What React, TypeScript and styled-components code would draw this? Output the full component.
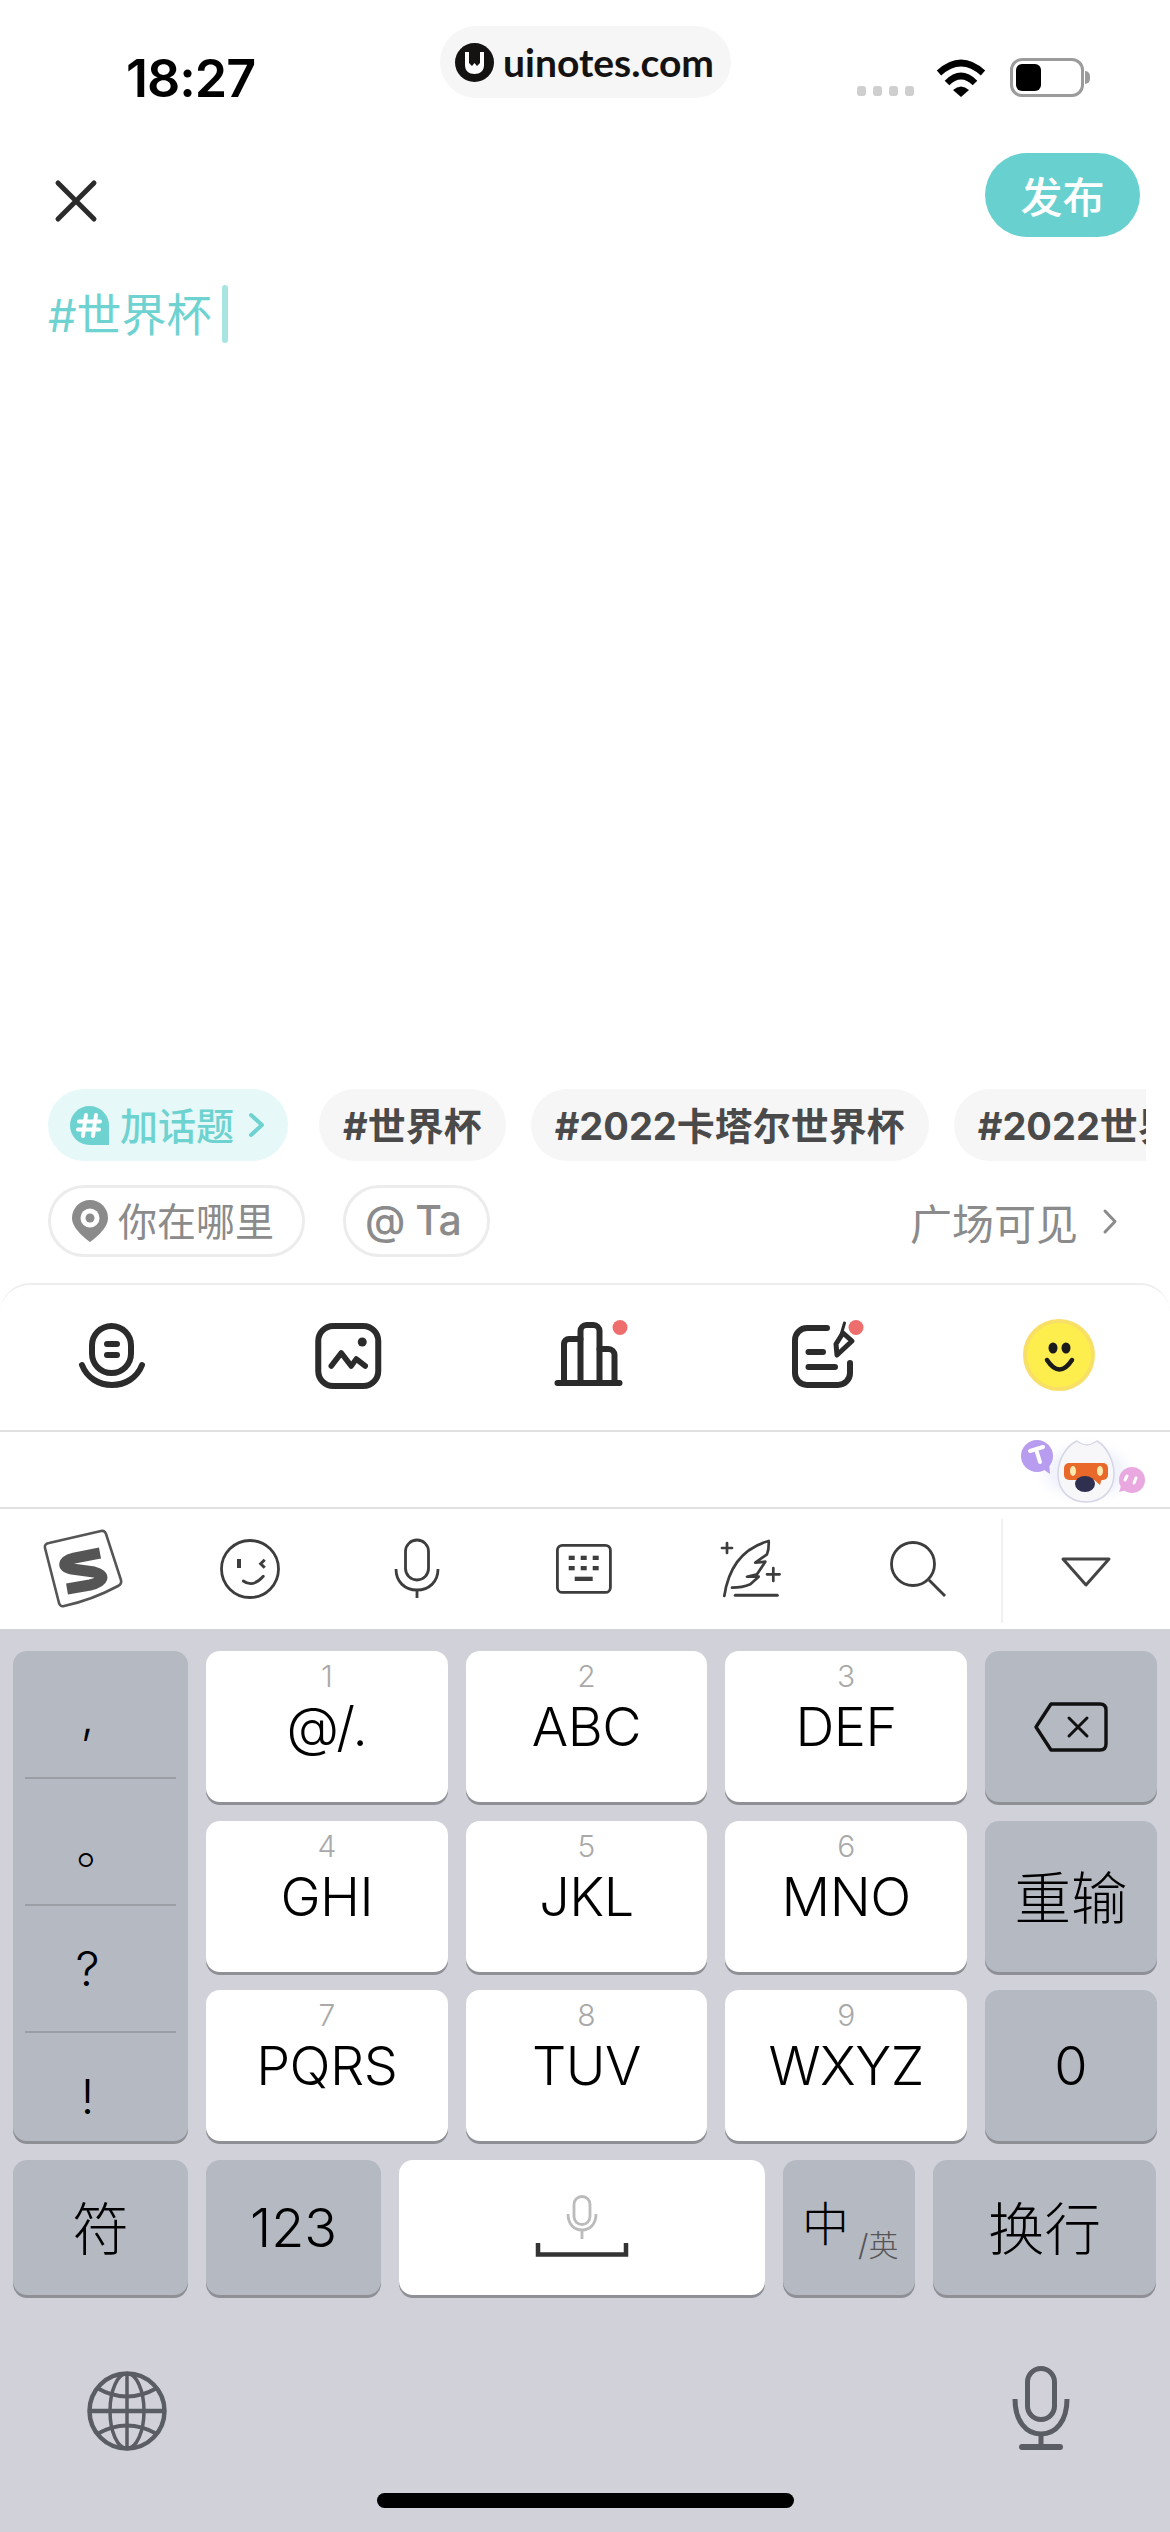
import styled, { createGlobalStyle } from 'styled-components';

const CJK = '"Inter", "Noto Sans CJK SC", sans-serif';
const TEAL = '#6ed3d0';

const GlobalStyle = createGlobalStyle`
  * { box-sizing: border-box; }
  html, body { margin: 0; padding: 0; background: #fff; }
  body { font-family: ${CJK}; }
`;

const Page = styled.div`
  width: 1170px;
  height: 2532px;
  display: flex;
  flex-direction: column;
  overflow: hidden;
  background: #fff;
`;

/* status bar */
const StatusBar = styled.div`
  height: 153px;
  flex-shrink: 0;
  display: grid;
  grid-template-columns: 440px 291px 1fr;
  align-items: start;
`;

const Time = styled.div`
  padding: 50px 0 0 126px;
  font-size: 52px;
  line-height: 58px;
  font-weight: 600;
  letter-spacing: -1px;
  color: #000;
`;

const WatermarkPill = styled.div`
  margin-top: 26px;
  height: 72px;
  border-radius: 36px;
  background: #f6f6f6;
  display: flex;
  align-items: center;
  padding: 0 0 0 15px;
  gap: 9px;
  font-family: 'Lato', sans-serif;
  font-size: 39px;
  font-weight: 700;
  color: #151212;
`;

const StatusIcons = styled.div`
  margin-top: 58px;
  height: 39px;
  padding-left: 126px;
  display: flex;
  align-items: flex-end;
`;

const SignalDots = styled.div`
  display: flex;
  gap: 7px;
  margin: 0 22px 1px 0;
`;

const SignalDot = styled.span`
  width: 9px;
  height: 10px;
  border-radius: 3px;
  background: #cfcfcf;
`;

const Battery = styled.div`
  position: relative;
  margin-left: 24px;
  width: 74px;
  height: 39px;
  border: 3px solid #9b9b9b;
  border-radius: 12px;
  padding: 3px;

  &::after {
    content: '';
    position: absolute;
    left: 72px;
    top: 10px;
    width: 5px;
    height: 13px;
    border-radius: 0 6px 6px 0;
    background: #9b9b9b;
  }
`;

const BatteryFill = styled.div`
  width: 25px;
  height: 100%;
  border-radius: 6px;
  background: #000;
`;

/* header + compose */
const Header = styled.div`
  height: 84px;
  flex-shrink: 0;
  padding: 0 30px 0 55px;
  display: flex;
  align-items: center;
  justify-content: space-between;
`;

const CloseButton = styled.div`
  padding-top: 12px;
`;

const PublishButton = styled.div`
  width: 155px;
  height: 84px;
  border-radius: 42px;
  background: #68d1cf;
  color: #fff;
  font-size: 42px;
  font-weight: 500;
  padding-bottom: 2px;
  display: flex;
  align-items: center;
  justify-content: center;
`;

const Compose = styled.div`
  height: 852px;
  flex-shrink: 0;
  padding: 48px 0 0 48px;
  display: flex;
  align-items: flex-start;
  gap: 10px;
`;

const TopicText = styled.div`
  font-size: 45px;
  line-height: 58px;
  padding-top: 2px;
  color: ${TEAL};
`;

const Caret = styled.span`
  width: 6px;
  height: 58px;
  border-radius: 3px;
  background: #a8e4e2;
`;

/* topic chips */
const TagRow = styled.div`
  height: 72px;
  flex-shrink: 0;
  margin: 0 24px 0 48px;
  display: flex;
  gap: 25px;
  overflow: hidden;
`;

const AddTopic = styled.div`
  flex-shrink: 0;
  width: 240px;
  margin-right: 6px;
  padding-left: 22px;
  border-radius: 36px;
  background: #e6f8f8;
  color: ${TEAL};
  font-size: 38px;
  font-weight: 500;
  display: flex;
  align-items: center;
  gap: 11px;
`;

const ChipLabel = styled.span`
  margin-bottom: 4px;
`;

const ChevronSlot = styled.span`
  margin-left: 4px;
`;

const TopicChip = styled.div`
  flex-shrink: 0;
  padding: 0 24px 4px;
  border-radius: 36px;
  background: #f6f6f6;
  color: #4a4a4a;
  font-size: 38px;
  font-weight: 700;
  white-space: nowrap;
  display: flex;
  align-items: center;
`;

const MetaRow = styled.div`
  height: 72px;
  flex-shrink: 0;
  margin-top: 24px;
  padding: 0 52px 0 48px;
  display: flex;
  align-items: center;
  gap: 38px;
`;

const OutlineChip = styled.div<{ $width: number; $pad: number }>`
  width: ${(p) => p.$width}px;
  height: 72px;
  padding-left: ${(p) => p.$pad}px;
  border: 3px solid #ececec;
  border-radius: 36px;
  color: #8b8b8b;
  font-size: 39px;
  display: flex;
  align-items: center;
  gap: 10px;
`;

const MentionLabel = styled.span`
  margin-bottom: 2px;
  font-size: 41px;
  font-weight: 500;
  letter-spacing: -0.5px;
`;

const Visibility = styled.div`
  margin-left: auto;
  color: #8b8b8b;
  font-size: 42px;
  display: flex;
  align-items: center;
  gap: 25px;
`;

/* tools panel */
const ToolPanel = styled.div`
  height: 147px;
  flex-shrink: 0;
  margin-top: 26px;
  padding: 0 75px 5px 76px;
  border-top: 2px solid #eeeeee;
  border-radius: 30px 30px 0 0;
  display: flex;
  align-items: center;
  justify-content: space-between;
`;

const CandidateBar = styled.div`
  height: 79px;
  flex-shrink: 0;
  padding-right: 20px;
  border-top: 2px solid #e0e0e0;
  border-bottom: 2px solid #e0e0e0;
  display: flex;
  align-items: center;
  justify-content: flex-end;
`;

const ImeToolbar = styled.div`
  height: 120px;
  flex-shrink: 0;
  display: grid;
  grid-template-columns: repeat(6, 1fr) 169px;
`;

const ImeTool = styled.div<{ $divided?: boolean }>`
  display: flex;
  align-items: center;
  justify-content: center;
  ${(p) => p.$divided && 'margin: 10px 0 6px; border-left: 2px solid #f0f0f0;'}
`;

/* keyboard */
const Keyboard = styled.div`
  flex: 1;
  background: #d1d2d9;
  padding: 22px 13px 0;
  display: flex;
  flex-direction: column;
`;

const KeyGrid = styled.div`
  display: grid;
  grid-template-columns: 175px repeat(3, 1fr) 172px;
  grid-template-rows: repeat(3, 151px);
  column-gap: 18px;
  row-gap: 18.5px;
`;

const Key = styled.div<{ $dark?: boolean }>`
  border-radius: 14px;
  background: ${(p) => (p.$dark ? '#b5b9c2' : '#fff')};
  box-shadow: 0 3px 0 #8e9096;
  color: #000;
  display: flex;
  align-items: center;
  justify-content: center;
  font-size: 54px;
  font-weight: 300;
`;

const HanziKey = styled(Key)`
  font-size: 56.5px;
  padding-bottom: 5px;
`;

const PunctuationKey = styled(Key)`
  grid-row: 1 / span 3;
  display: grid;
  grid-template-columns: 1fr;
  grid-template-rows: 126px 127px 127px 1fr;
  align-items: stretch;
  justify-content: stretch;
  padding: 0 12px;
`;

const PunctuationCell = styled.div<{ $first?: boolean; $top: number; $left?: number }>`
  border-top: ${(p) => (p.$first ? 'none' : '2px solid #9b9ea5')};
  padding: ${(p) => p.$top}px 26px 0 ${(p) => p.$left ?? 0}px;
  display: flex;
  align-items: center;
  justify-content: center;
  font-size: 48px;
  line-height: 50px;
`;

const DigitKey = styled(Key)`
  flex-direction: column;
  justify-content: flex-start;
  padding-top: 8px;
`;

const KeyNumber = styled.span`
  font-size: 30px;
  line-height: 34px;
  color: #a9a9a9;
`;

const KeyLetters = styled.span`
  margin-top: 4px;
  line-height: 60px;
  letter-spacing: -0.5px;
`;

const BottomKeys = styled.div`
  margin-top: 19px;
  display: grid;
  grid-template-columns: 175px 175px 366px 132px 223px;
  grid-template-rows: 135px;
  column-gap: 18px;
`;

const SpaceKey = styled(Key)`
  flex-direction: column;
  gap: 4px;
  padding-bottom: 4px;
`;

const ModeKey = styled(Key)`
  justify-content: flex-start;
  padding-left: 19px;
`;

const ModeMain = styled.span`
  font-size: 47px;
  margin-top: -14px;
`;

const ModeSlash = styled.span`
  margin: 30px 0 0 9px;
  font-size: 30px;
  color: #555;
  white-space: nowrap;
`;

const SystemRow = styled.div`
  margin-top: 71px;
  padding: 0 87px 0 74px;
  display: flex;
  align-items: flex-start;
  justify-content: space-between;
`;

const GlobeSlot = styled.div`
  padding-top: 5px;
`;

const HomeBar = styled.div`
  align-self: center;
  margin-top: 42px;
  width: 417px;
  height: 15px;
  border-radius: 8px;
  background: #000;
`;

const Svg = styled.svg`
  display: block;
  flex-shrink: 0;
  overflow: visible;
`;

const ICON = '#2b2b2b';

const Logo = () => (
  <Svg width="39" height="39" viewBox="0 0 39 39">
    <circle cx="19.5" cy="19.5" r="19.5" fill="#151212" />
    <path d="M10 9H14V20L17 23L19.5 20L22 23L25 20V9H29V22C29 28 25 31 19.5 31C14 31 10 28 10 22Z" fill="#fff" />
  </Svg>
);

const WifiIcon = () => (
  <Svg width="50" height="38" viewBox="0 0 50 38">
    <path d="M3 14Q25 -6 47 14" fill="none" stroke="#000" strokeWidth="6.5" strokeLinecap="butt" />
    <path d="M11 24Q25 10 39 24" fill="none" stroke="#000" strokeWidth="6.5" />
    <path d="M17 31Q25 24 33 31L25 38Z" fill="#000" />
  </Svg>
);

const CloseIcon = () => (
  <Svg width="42" height="42" viewBox="0 0 42 42">
    <path d="M3 3L39 39M39 3L3 39" stroke="#2b2b2b" strokeWidth="5" strokeLinecap="round" />
  </Svg>
);

const HashBubble = () => (
  <Svg width="39" height="39" viewBox="0 0 39 39">
    <path d="M19.5 0A19.5 19.5 0 1 0 19.5 39H39V19.5A19.5 19.5 0 0 0 19.5 0Z" fill={TEAL} />
    <path d="M16 9L13 30M26 9L23 30M9 15.5H30M8 23.5H29" stroke="#fff" strokeWidth="4" strokeLinecap="round" />
  </Svg>
);

const Chevron = ({ color, w = 16, h = 24, sw = 4 }: { color: string; w?: number; h?: number; sw?: number }) => (
  <Svg width={w} height={h} viewBox={`0 0 ${w} ${h}`}>
    <path d={`M2 2L${w - 3} ${h / 2}L2 ${h - 2}`} fill="none" stroke={color} strokeWidth={sw} strokeLinecap="round" strokeLinejoin="round" />
  </Svg>
);

const PinIcon = () => (
  <Svg width="36" height="42" viewBox="0 0 36 42">
    <path d="M18 0C8 0 0 8 0 18C0 30 18 42 18 42C18 42 36 30 36 18C36 8 28 0 18 0Z" fill="#8b8b8b" />
    <circle cx="18" cy="18" r="9.5" fill="#fff" />
    <circle cx="18" cy="18" r="4.5" fill="#8b8b8b" />
  </Svg>
);

const VoiceTool = () => (
  <Svg width="72" height="72" viewBox="-3 -4 72 72" fill="none" stroke={ICON} strokeWidth="6" strokeLinecap="round">
    <rect x="13" y="3" width="39" height="47" rx="19.5" />
    <path d="M28 21H38M28 32H38" />
    <path d="M3 42C8 55 20 62 33 62S58 55 63 42" />
  </Svg>
);

const ImageTool = () => (
  <Svg width="72" height="72" viewBox="-2.25 -4 72 72" fill="none" stroke={ICON} strokeWidth="6" strokeLinecap="round" strokeLinejoin="round">
    <rect x="3" y="3" width="60" height="60" rx="15" />
    <path d="M16 43L26 30L36 43L41 36L50 43" strokeWidth="5.5" />
    <circle cx="47" cy="19" r="4.5" fill={ICON} stroke="none" />
  </Svg>
);

const ChartTool = () => (
  <Svg width="72" height="72" viewBox="-5.5 -3 72 72" fill="none" stroke={ICON} strokeWidth="6" strokeLinecap="round">
    <path d="M2 61H64" />
    <path d="M8.5 60V22A5 5 0 0 1 13.5 17H25" />
    <path d="M25 60V9A6 6 0 0 1 31 3H38A6 6 0 0 1 44 9V60" />
    <path d="M44 27H53A6 6 0 0 1 59 33V60" />
    <circle cx="64.5" cy="5.5" r="7.5" fill="#ee6e6e" stroke="none" />
  </Svg>
);

const NoteTool = () => (
  <Svg width="72" height="72" viewBox="-4 -3 72 72" fill="none" stroke={ICON} strokeWidth="6" strokeLinecap="round" strokeLinejoin="round">
    <path d="M37 6H17A12 12 0 0 0 5 18V51A12 12 0 0 0 17 63H48A12 12 0 0 0 60 51V41" />
    <path d="M18.5 30H33M18.5 45H45" />
    <path d="M46 22L53 11L62 19L47 33Z" strokeWidth="5" />
    <path d="M51 13L54.5 1" strokeWidth="3" />
    <circle cx="66" cy="5.5" r="7.5" fill="#ee6e6e" stroke="none" />
  </Svg>
);

const SmileTool = () => (
  <Svg width="72" height="72" viewBox="0 0 72 72" fill="none">
    <circle cx="36" cy="36" r="34" fill="#fdee4d" stroke="#f8df65" strokeWidth="4" />
    <ellipse cx="30" cy="29" rx="4.5" ry="5.5" fill="#1a1a1a" />
    <ellipse cx="43" cy="29" rx="4.5" ry="5.5" fill="#1a1a1a" />
    <path d="M24 41Q36.5 60 49 41" stroke="#1a1a1a" strokeWidth="4.5" strokeLinecap="round" />
  </Svg>
);

const Mascot = () => (
  <Svg width="130" height="72" viewBox="0 0 130 72">
    <defs>
      <radialGradient id="mascotGlow">
        <stop offset="0.6" stopColor="#eef0fb" stopOpacity="0.8" />
        <stop offset="1" stopColor="#ffffff" stopOpacity="0" />
      </radialGradient>
    </defs>
    <ellipse cx="66" cy="38" rx="56" ry="36" fill="url(#mascotGlow)" />
    <circle cx="17" cy="22" r="16" fill="#b89cf0" />
    <path d="M20 33L30 40L29 28Z" fill="#b89cf0" />
    <path d="M10 17L23 13M16 15L20 28" stroke="#fff" strokeWidth="4" strokeLinecap="round" />
    <circle cx="112" cy="46" r="13" fill="#e9a9e0" />
    <path d="M101 52L99 58L107 56Z" fill="#e9a9e0" />
    <path d="M107 42L105 46M116 44L114 49" stroke="#fff" strokeWidth="3" strokeLinecap="round" />
    <path d="M57 7C46 12 38 26 38 40C38 57 50 68 66 68C82 68 94 57 94 40C94 26 86 12 77 7C74 9 70 11 67 11C64 11 60 9 57 7Z" fill="#f7f7fa" stroke="#d5d6e6" strokeWidth="1.5" />
    <rect x="44" y="29" width="44" height="17" rx="5" fill="#e8692a" />
    <path d="M72 44L82 44L80 51Z" fill="#e8692a" />
    <ellipse cx="53" cy="37" rx="3" ry="5" fill="#fde9b0" />
    <ellipse cx="80" cy="37" rx="3" ry="5" fill="#fde9b0" />
    <ellipse cx="65" cy="50" rx="10" ry="8" fill="#2f3050" />
  </Svg>
);

const SogouLogo = () => (
  <Svg width="78" height="78" viewBox="0 0 78 78">
    <path d="M5 13L57 1Q61 0 62 4L77 50Q78 54 74 56Q48 70 20 76Q16 77 15 73L1 18Q0 14 5 13Z" fill="none" stroke="#555" strokeWidth="2.6" />
    <path d="M56 23L30 28C18 31 18 37 28 39L50 42C62 45 60 52 46 55L23 59" fill="none" stroke="#555" strokeWidth="11" />
  </Svg>
);

const WinkIcon = () => (
  <Svg width="60" height="60" viewBox="0 0 60 60" fill="none" stroke="#3d3d3d" strokeWidth="2.8">
    <circle cx="30" cy="30" r="28.5" />
    <rect x="17" y="20" width="4" height="9" fill="#3d3d3d" stroke="none" />
    <path d="M44.7 20.7L40.7 24.7L44.7 28.7" strokeWidth="3" />
    <path d="M23.3 42Q33 49 43.3 37.3" strokeLinecap="round" />
  </Svg>
);

const SmallMic = () => (
  <Svg width="50" height="62" viewBox="0 0 50 62" fill="none" stroke="#3d3d3d" strokeWidth="2.8">
    <rect x="13.5" y="2" width="23" height="40" rx="11.5" />
    <path d="M4 31C4 44 13 52 25 52S46 44 46 31M25 52V60" />
  </Svg>
);

const KeyboardIcon = () => (
  <Svg width="56" height="50" viewBox="0 0 56 50">
    <rect x="1.4" y="1.4" width="53" height="47" rx="5" fill="none" stroke="#3d3d3d" strokeWidth="2.8" />
    {[12.7, 24.7, 36.7].map((x) => (
      <g key={x} fill="#3d3d3d">
        <rect x={x} y="11.7" width="6" height="4.3" />
        <rect x={x} y="22" width="6" height="4.3" />
      </g>
    ))}
    <rect x="18.7" y="32.7" width="18" height="4.3" fill="#3d3d3d" />
  </Svg>
);

const FeatherIcon = () => (
  <Svg width="58" height="58" viewBox="0 0 58 58" fill="none" stroke="#3d3d3d" strokeWidth="2.7" strokeLinecap="round" strokeLinejoin="round">
    <path d="M2.3 56C5 38 14 10 46.7 1C47 8 46 12 45 14.3L33.3 22.7L43.3 21.7L35 34.3L25 36.7H36.7L28.3 44.3C22 47 16 47.7 10 47.7" />
    <path d="M13.3 55.3H55.3" strokeWidth="3" />
    <path d="M5 3V13M0 8H10M51.3 28V41M45 34.3H57.6" />
  </Svg>
);

const SearchIcon = () => (
  <Svg width="56" height="56" viewBox="0 0 56 56" fill="none" stroke="#3d3d3d" strokeWidth="2.8">
    <circle cx="23" cy="23" r="21.5" />
    <path d="M39 39L55 55" />
  </Svg>
);

const CollapseIcon = () => (
  <Svg width="52" height="31" viewBox="0 0 52 31">
    <path d="M3 3H49L26 29Z" fill="none" stroke="#444" strokeWidth="3" strokeLinejoin="round" />
  </Svg>
);

const BackspaceIcon = () => (
  <Svg width="74" height="50" viewBox="0 0 74 50" fill="none" stroke="#111" strokeWidth="3.4" strokeLinejoin="round" strokeLinecap="round">
    <path d="M17 2H66Q72 2 72 8V42Q72 48 66 48H17L2 25Z" />
    <path d="M35 16L53 34M53 16L35 34" strokeWidth="3" />
  </Svg>
);

const SpaceGlyph = () => (
  <>
    <Svg width="32" height="44" viewBox="0 0 32 44" fill="none" stroke="#bbb" strokeWidth="2.8">
      <rect x="8" y="1.5" width="16" height="28" rx="8" />
      <path d="M2 19C2 29 8 35 16 35S30 29 30 19M16 35V44" />
    </Svg>
    <Svg width="92" height="14" viewBox="0 0 92 14" fill="none" stroke="#333" strokeWidth="4.5">
      <path d="M2 0V11.5H90V0" />
    </Svg>
  </>
);

const GlobeIcon = () => (
  <Svg width="80" height="80" viewBox="0 0 80 80" fill="none" stroke="#5a5d63" strokeWidth="4.5">
    <circle cx="40" cy="40" r="37.5" />
    <ellipse cx="40" cy="40" rx="17" ry="37.5" strokeWidth="3.5" />
    <path d="M40 2.5V77.5" strokeWidth="3.5" />
    <path d="M2.5 40H77.5" />
    <path d="M10 17Q40 34 70 17M10 63Q40 46 70 63" strokeWidth="4" />
  </Svg>
);

const DictationIcon = () => (
  <Svg width="58" height="84" viewBox="0 0 58 84" fill="none" stroke="#5a5d63" strokeWidth="5">
    <rect x="15.5" y="2.5" width="27" height="51" rx="13.5" />
    <path d="M3 33C3 55 14 68 29 68S55 55 55 33M29 68V81" />
    <path d="M10 81H48" strokeWidth="6" strokeLinecap="round" />
  </Svg>
);

const DIGIT_KEYS: [string, string][] = [
  ['1', '@/.'],
  ['2', 'ABC'],
  ['3', 'DEF'],
  ['4', 'GHI'],
  ['5', 'JKL'],
  ['6', 'MNO'],
  ['7', 'PQRS'],
  ['8', 'TUV'],
  ['9', 'WXYZ'],
];

const digitKey = (i: number) => (
  <DigitKey key={i}>
    <KeyNumber>{DIGIT_KEYS[i][0]}</KeyNumber>
    <KeyLetters>{DIGIT_KEYS[i][1]}</KeyLetters>
  </DigitKey>
);

const App = () => {
  return (
    <Page>
      <GlobalStyle />
      <StatusBar>
        <Time>18:27</Time>
        <WatermarkPill>
          <Logo />
          uinotes.com
        </WatermarkPill>
        <StatusIcons>
          <SignalDots>
            <SignalDot />
            <SignalDot />
            <SignalDot />
            <SignalDot />
          </SignalDots>
          <WifiIcon />
          <Battery>
            <BatteryFill />
          </Battery>
        </StatusIcons>
      </StatusBar>

      <Header>
        <CloseButton>
          <CloseIcon />
        </CloseButton>
        <PublishButton>发布</PublishButton>
      </Header>

      <Compose>
        <TopicText>#世界杯</TopicText>
        <Caret />
      </Compose>

      <TagRow>
        <AddTopic>
          <HashBubble />
          <ChipLabel>加话题</ChipLabel>
          <ChevronSlot>
            <Chevron color={TEAL} />
          </ChevronSlot>
        </AddTopic>
        <TopicChip>#世界杯</TopicChip>
        <TopicChip>#2022卡塔尔世界杯</TopicChip>
        <TopicChip>#2022世界杯</TopicChip>
      </TagRow>

      <MetaRow>
        <OutlineChip $width={257} $pad={21}>
          <PinIcon />
          <ChipLabel>你在哪里</ChipLabel>
        </OutlineChip>
        <OutlineChip $width={147} $pad={19}>
          <MentionLabel>@ Ta</MentionLabel>
        </OutlineChip>
        <Visibility>
          广场可见
          <Chevron color="#8b8b8b" w={15} h={25} sw={3} />
        </Visibility>
      </MetaRow>

      <ToolPanel>
        <VoiceTool />
        <ImageTool />
        <ChartTool />
        <NoteTool />
        <SmileTool />
      </ToolPanel>

      <CandidateBar>
        <Mascot />
      </CandidateBar>

      <ImeToolbar>
        <ImeTool><SogouLogo /></ImeTool>
        <ImeTool><WinkIcon /></ImeTool>
        <ImeTool><SmallMic /></ImeTool>
        <ImeTool><KeyboardIcon /></ImeTool>
        <ImeTool><FeatherIcon /></ImeTool>
        <ImeTool><SearchIcon /></ImeTool>
        <ImeTool $divided><CollapseIcon /></ImeTool>
      </ImeToolbar>

      <Keyboard>
        <KeyGrid>
          <PunctuationKey $dark>
            <PunctuationCell $first $top={4}>,</PunctuationCell>
            <PunctuationCell $top={10} $left={26}>。</PunctuationCell>
            <PunctuationCell $top={0}>?</PunctuationCell>
            <PunctuationCell $top={20}>!</PunctuationCell>
          </PunctuationKey>
          {digitKey(0)}
          {digitKey(1)}
          {digitKey(2)}
          <Key $dark><BackspaceIcon /></Key>
          {digitKey(3)}
          {digitKey(4)}
          {digitKey(5)}
          <HanziKey $dark>重输</HanziKey>
          {digitKey(6)}
          {digitKey(7)}
          {digitKey(8)}
          <Key $dark>0</Key>
        </KeyGrid>

        <BottomKeys>
          <HanziKey $dark>符</HanziKey>
          <Key $dark>123</Key>
          <SpaceKey><SpaceGlyph /></SpaceKey>
          <ModeKey $dark>
            <ModeMain>中</ModeMain>
            <ModeSlash>/英</ModeSlash>
          </ModeKey>
          <HanziKey $dark>换行</HanziKey>
        </BottomKeys>

        <SystemRow>
          <GlobeSlot>
            <GlobeIcon />
          </GlobeSlot>
          <DictationIcon />
        </SystemRow>

        <HomeBar />
      </Keyboard>
    </Page>
  );
};

export default App;
